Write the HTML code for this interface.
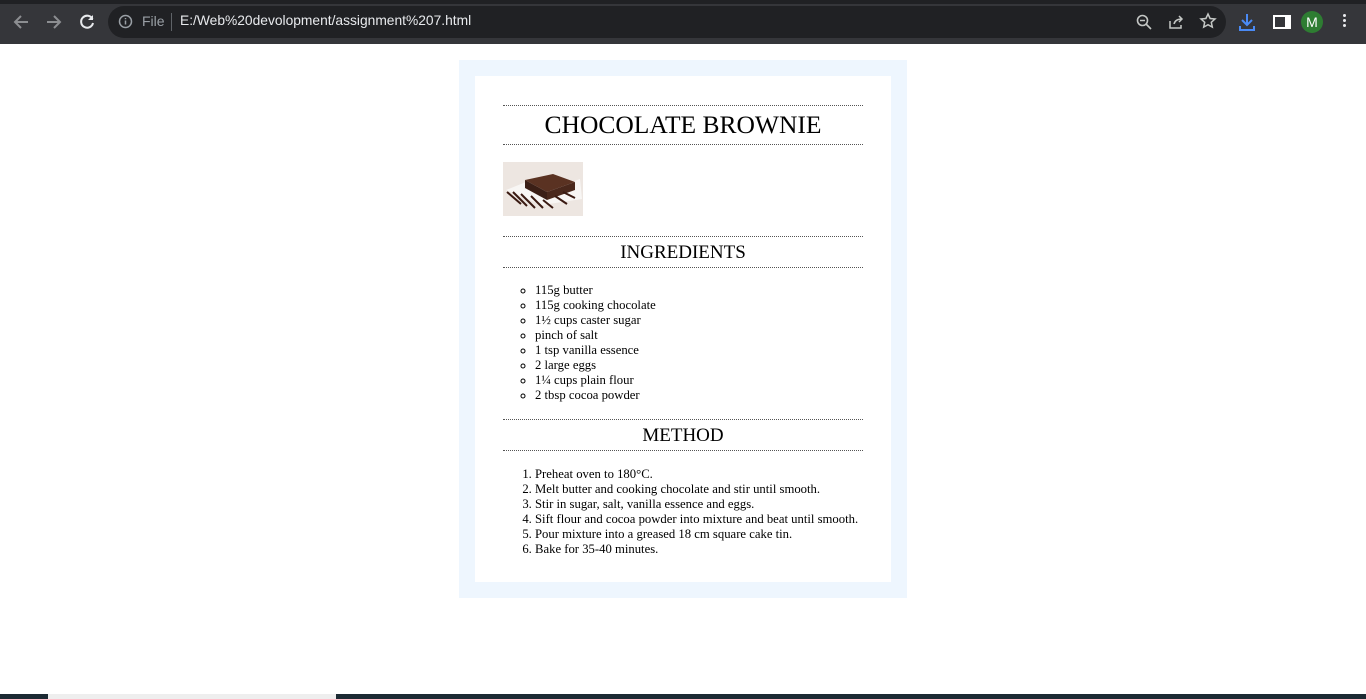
<!DOCTYPE html>
<html><head><style>
body{margin:0;width:1366px;height:699px;overflow:hidden;background:#fff;font-family:"Liberation Serif",serif;position:relative}
.top{position:absolute;left:0;top:0;width:1366px;height:44px;background:#35363a}
.top .strip{position:absolute;left:0;top:0;width:1366px;height:4px;background:#202124}
.url{position:absolute;left:108px;top:6px;width:1118px;height:32px;border-radius:16px;background:#202124}
.t{position:absolute;font-family:"Liberation Sans",sans-serif;font-size:14px;color:#e8eaed}
.outer{position:absolute;left:459px;top:60px;width:448px;height:538px;background:#eef6fe}
.inner{position:absolute;left:475px;top:76px;width:416px;height:506px;background:#fff}
.hr{position:absolute;left:503px;width:360px;border-top:1px dotted #555}
.h{position:absolute;left:503px;width:360px;text-align:center;color:#000}
ul,ol{position:absolute;margin:0;padding:0;font-size:12.7px;line-height:15px;left:535px}
ul{list-style:circle}
.task{position:absolute;left:0;top:694px;width:1366px;height:5px;background:#1c2a33}
</style></head><body>
<div class="top"><div class="strip"></div>
<svg style="position:absolute;left:12px;top:13px" width="18" height="18" viewBox="0 0 18 18"><path d="M16 9H3M9 3L3 9l6 6" stroke="#8c8e91" stroke-width="2" fill="none"/></svg>
<svg style="position:absolute;left:45px;top:13px" width="18" height="18" viewBox="0 0 18 18"><path d="M2 9h13M9 3l6 6-6 6" stroke="#8c8e91" stroke-width="2" fill="none"/></svg>
<svg style="position:absolute;left:78px;top:13px" width="18" height="18" viewBox="0 0 18 18"><path d="M14.5 6A6 6 0 1 0 15 10" stroke="#e8eaed" stroke-width="2" fill="none"/><path d="M15 2v5h-5z" fill="#e8eaed"/></svg>
<div class="url"></div>
<svg style="position:absolute;left:118px;top:14px" width="15" height="15" viewBox="0 0 15 15"><circle cx="7.5" cy="7.5" r="6" stroke="#9aa0a6" stroke-width="1.5" fill="none"/><path d="M7.5 6.5v4M7.5 4v1.2" stroke="#9aa0a6" stroke-width="1.5"/></svg>
<div class="t" style="left:142px;top:13px;color:#9aa0a6">File</div>
<div style="position:absolute;left:171px;top:13px;width:1px;height:18px;background:#5f6368"></div>
<div class="t" style="left:180px;top:13px;font-size:13.8px">E:/Web%20devolopment/assignment%207.html</div>
<svg style="position:absolute;left:1135px;top:13px" width="18" height="18" viewBox="0 0 18 18"><circle cx="7.5" cy="7.5" r="5" stroke="#c4c7c5" stroke-width="1.6" fill="none"/><path d="M11 11l5 5M5 7.5h5" stroke="#c4c7c5" stroke-width="1.6"/></svg>
<svg style="position:absolute;left:1167px;top:13px" width="18" height="18" viewBox="0 0 18 18"><path d="M3 8v7h11v-3M7 11c1-4 4-5 8-5M12 3l3 3-3 3" stroke="#c4c7c5" stroke-width="1.5" fill="none"/></svg>
<svg style="position:absolute;left:1199px;top:12px" width="18" height="18" viewBox="0 0 18 18"><path d="M9 2l2.1 4.5 4.9.5-3.7 3.3 1 4.8L9 12.7 4.7 15.1l1-4.8L2 7l4.9-.5z" stroke="#c4c7c5" stroke-width="1.5" fill="none"/></svg>
<svg style="position:absolute;left:1238px;top:12px" width="18" height="20" viewBox="0 0 18 20"><path d="M9 2v11M4 8l5 5 5-5M2 14v4h14v-4" stroke="#4a8af4" stroke-width="2" fill="none"/></svg>
<div style="position:absolute;left:1273px;top:15px;width:10px;height:10px;border:2px solid #fff;border-right-width:6px"></div>
<div style="position:absolute;left:1301px;top:11px;width:22px;height:22px;border-radius:50%;background:#2e7d32;color:#fff;font:14px 'Liberation Sans',sans-serif;text-align:center;line-height:22px">M</div>
<div style="position:absolute;left:1343px;top:14px;width:3px;height:3px;background:#e8eaed;border-radius:50%;box-shadow:0 5px 0 #e8eaed,0 10px 0 #e8eaed"></div>
</div>
<div class="outer"></div><div class="inner"></div>
<div class="hr" style="top:105px"></div>
<div class="h" style="top:110px;font-size:25.5px;line-height:30px">CHOCOLATE BROWNIE</div>
<div class="hr" style="top:144px"></div>
<svg style="position:absolute;left:503px;top:162px" width="80" height="54" viewBox="0 0 80 54"><rect width="80" height="54" fill="#ede6e1"/><path d="M3 28l20-8 40 2 14-5 2 20-40 6z" fill="#f8f6f4"/><path d="M22 18l28-6 22 8-28 10z" fill="#5a3222"/><path d="M22 18l22 12v8L22 26z" fill="#3b1f16"/><path d="M44 30l28-10v8L44 38z" fill="#4a281c"/><path d="M4 30l14 12M10 30l14 14M18 32l14 14M28 34l12 12M40 38l10 8M52 34l12 8M60 30l12 6" stroke="#3a1a12" stroke-width="2"/></svg>
<div class="hr" style="top:236px"></div>
<div class="h" style="top:242px;font-size:19px;line-height:22px">INGREDIENTS</div>
<div class="hr" style="top:267px"></div>
<ul style="top:283px"><li>115g butter</li><li>115g cooking chocolate</li><li>1½ cups caster sugar</li><li>pinch of salt</li><li>1 tsp vanilla essence</li><li>2 large eggs</li><li>1¼ cups plain flour</li><li>2 tbsp cocoa powder</li></ul>
<div class="hr" style="top:419px"></div>
<div class="h" style="top:425px;font-size:19px;line-height:22px">METHOD</div>
<div class="hr" style="top:450px"></div>
<ol style="top:467px"><li>Preheat oven to 180°C.</li><li>Melt butter and cooking chocolate and stir until smooth.</li><li>Stir in sugar, salt, vanilla essence and eggs.</li><li>Sift flour and cocoa powder into mixture and beat until smooth.</li><li>Pour mixture into a greased 18 cm square cake tin.</li><li>Bake for 35-40 minutes.</li></ol>
<div class="task"></div>
<div style="position:absolute;left:48px;top:694px;width:288px;height:5px;background:#eee"></div>
</body></html>
